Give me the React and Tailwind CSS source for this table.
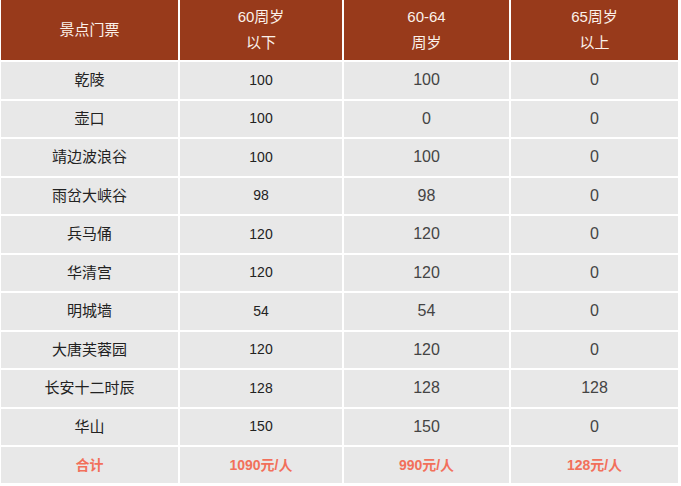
const rows = [
  ['乾陵', '100', '100', '0'],
  ['壶口', '100', '0', '0'],
  ['靖边波浪谷', '100', '100', '0'],
  ['雨岔大峡谷', '98', '98', '0'],
  ['兵马俑', '120', '120', '0'],
  ['华清宫', '120', '120', '0'],
  ['明城墙', '54', '54', '0'],
  ['大唐芙蓉园', '120', '120', '0'],
  ['长安十二时辰', '128', '128', '128'],
  ['华山', '150', '150', '0'],
]

const cols = 'grid grid-cols-[177px_162px_165px_167px] gap-x-[2px]'

export default function App() {
  return (
    <div className="w-[681px] h-[486px] bg-white pl-[1px]" style={{ fontFamily: '"Liberation Sans", "Noto Sans CJK SC", sans-serif' }}>
      <div className="flex flex-col gap-y-[2px] w-[677px]">
        <div className={`${cols} h-[60px] text-[15px] text-[#fbf1ea]`}>
          <div className="bg-[#983a1b] flex items-center justify-center">景点门票</div>
          <div className="bg-[#983a1b] flex flex-col items-center justify-center leading-[26px]">
            <span>60周岁</span>
            <span>以下</span>
          </div>
          <div className="bg-[#983a1b] flex flex-col items-center justify-center leading-[26px]">
            <span>60-64</span>
            <span>周岁</span>
          </div>
          <div className="bg-[#983a1b] flex flex-col items-center justify-center leading-[26px]">
            <span>65周岁</span>
            <span>以上</span>
          </div>
        </div>
        {rows.map(r => (
          <div key={r[0]} className={`${cols} h-[36.5px]`}>
            <div className="bg-[#e8e8e8] flex items-center justify-center text-[15px] text-[#222]">{r[0]}</div>
            <div className="bg-[#e8e8e8] flex items-center justify-center text-[14px] text-[#222]">{r[1]}</div>
            <div className="bg-[#e8e8e8] flex items-center justify-center text-[16px] text-[#444]">{r[2]}</div>
            <div className="bg-[#e8e8e8] flex items-center justify-center text-[16px] text-[#444]">{r[3]}</div>
          </div>
        ))}
        <div className={`${cols} h-[36px] text-[14px] font-bold text-[#f2705b]`}>
          <div className="bg-[#e8e8e8] flex items-center justify-center">合计</div>
          <div className="bg-[#e8e8e8] flex items-center justify-center">1090元/人</div>
          <div className="bg-[#e8e8e8] flex items-center justify-center">990元/人</div>
          <div className="bg-[#e8e8e8] flex items-center justify-center">128元/人</div>
        </div>
      </div>
    </div>
  )
}
